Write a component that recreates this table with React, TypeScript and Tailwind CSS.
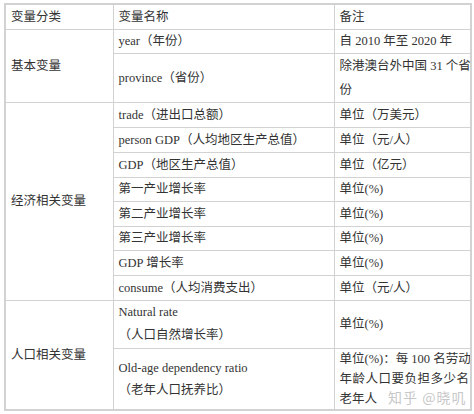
import React from "react";

const cell = "border border-[#d2d2d2] px-[5px] py-0 align-middle whitespace-nowrap overflow-hidden";
const note = "border border-[#d2d2d2] pl-[5px] pr-[1px] py-0 align-middle whitespace-nowrap overflow-hidden";

const Row: React.FunctionComponent<{ h: string; name: React.ReactNode; remark: React.ReactNode }> = ({ h, name, remark }) => (
    <tr className={h}>
        <td className={cell}>{name}</td>
        <td className={note}>{remark}</td>
    </tr>
);

const App: React.FunctionComponent = () => {
    return (
        <div className="w-[474px] h-[414px] bg-white pt-[3px] pl-[4px] relative text-[12.5px] leading-[18px] text-[#333] font-['Liberation_Serif','Noto_Sans_CJK_SC',serif]">
            <table className="border-collapse table-fixed w-[466px] border-2 border-[#d2d2d2]">
                <colgroup>
                    <col className="w-[108px]" />
                    <col className="w-[221px]" />
                    <col className="w-[137px]" />
                </colgroup>
                <tbody>
                    <tr className="h-[25px]">
                        <td className={cell}>变量分类</td>
                        <td className={cell}>变量名称</td>
                        <td className={note}>备注</td>
                    </tr>
                    <tr className="h-[24px]">
                        <td className={cell} rowSpan={2}>基本变量</td>
                        <td className={cell}>year（年份）</td>
                        <td className={note}>自 2010 年至 2020 年</td>
                    </tr>
                    <Row
                        h="h-[48px]"
                        name="province（省份）"
                        remark={<div className="leading-[24px]"><div className="text-justify [text-align-last:justify]">除港澳台外中国 31 个省</div><div>份</div></div>}
                    />
                    <tr className="h-[25px]">
                        <td className={cell} rowSpan={8}>经济相关变量</td>
                        <td className={cell}>trade（进出口总额）</td>
                        <td className={note}>单位（万美元）</td>
                    </tr>
                    <Row h="h-[25px]" name="person GDP（人均地区生产总值）" remark="单位（元/人）" />
                    <Row h="h-[25px]" name="GDP（地区生产总值）" remark="单位（亿元）" />
                    <Row h="h-[24px]" name="第一产业增长率" remark="单位(%)" />
                    <Row h="h-[25px]" name="第二产业增长率" remark="单位(%)" />
                    <Row h="h-[24px]" name="第三产业增长率" remark="单位(%)" />
                    <Row h="h-[25px]" name="GDP 增长率" remark="单位(%)" />
                    <Row h="h-[25px]" name="consume（人均消费支出）" remark="单位（元/人）" />
                    <tr className="h-[48px]">
                        <td className={cell} rowSpan={2}>人口相关变量</td>
                        <td className={cell}>
                            <div className="leading-[23px]">
                                <div>Natural rate</div>
                                <div>（人口自然增长率）</div>
                            </div>
                        </td>
                        <td className={note}>单位(%)</td>
                    </tr>
                    <Row
                        h="h-[62px]"
                        name={<div className="leading-[22px]"><div>Old-age dependency ratio</div><div>（老年人口抚养比）</div></div>}
                        remark={
                            <div className="leading-[20px]">
                                <div className="text-justify [text-align-last:justify]">单位(%)：每 100 名劳动</div>
                                <div className="text-justify [text-align-last:justify]">年龄人口要负担多少名</div>
                                <div>老年人</div>
                            </div>
                        }
                    />
                </tbody>
            </table>
            <div className="absolute left-[388px] top-[388px] text-[14px] leading-[18px] text-[#c8c8c8] font-['Noto_Sans_CJK_SC',sans-serif] tracking-[1px]">知乎 @晓叽</div>
        </div>
    );
};

export default App;
